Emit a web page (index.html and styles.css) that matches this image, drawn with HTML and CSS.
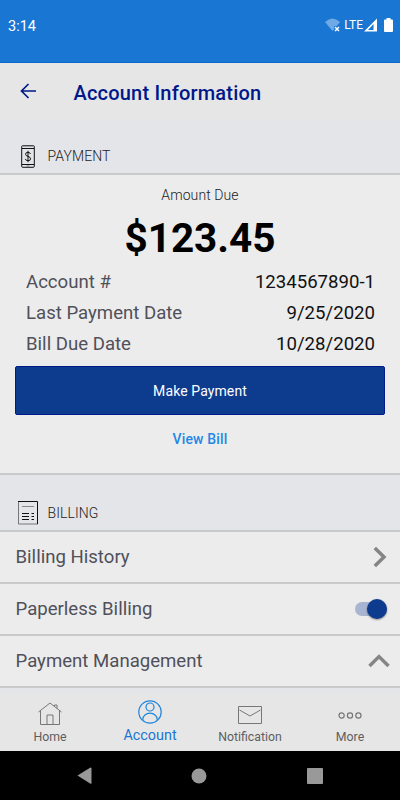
FILE: index.html
```html
<!DOCTYPE html>
<html lang="en">
<head>
<meta charset="utf-8">
<title>Account Information</title>
<link rel="stylesheet" href="styles.css">
</head>
<body>
<div class="phone">
  <div class="status">
    <span class="clock">3:14</span>
    <svg class="wifi" width="16" height="14" viewBox="0 0 16 14"><path d="M0 4Q7.500-3 15 4L7.500 13Z" fill="#70aae6"/><path d="M9 8h7v6H9z" fill="#1976d2"/><path d="M10 9l4 4M14 9l-4 4" stroke="#fff" stroke-width="1.500"/></svg>
    <span class="lte">LTE</span>
    <svg class="signal" width="13" height="14" viewBox="0 0 13 14"><path d="M0 13.500L13 .5v13z" fill="#fff"/><path d="M9.500 6v6H4z" fill="#1976d2"/></svg>
    <svg class="battery" width="9" height="14" viewBox="0 0 9 14"><path d="M2.500 0h4v1.500H8q1 0 1 1V13q0 1-1 1H1q-1 0-1-1V2.500q0-1 1-1h1.500z" fill="#fff"/></svg>
  </div>
  <header class="header">
    <svg width="18" height="16" viewBox="0 0 18 16" fill="none" stroke="#00188a" stroke-width="1.700"><path d="M17 8H2.500M9.500 1L2.500 8l7 7"/></svg>
    <h1>Account Information</h1>
  </header>
  <div class="section">
    <svg width="14" height="23" viewBox="0 0 14 23" fill="none" stroke="#111"><rect x=".7" y=".7" width="12.600" height="21.600" rx="1"/><path d="M1 3.500h12M1 19.500h12"/><path d="M1 1.300h12" stroke="#999"/><path d="M9.500 9Q9 7.300 7 7.300 4.600 7.300 4.600 9.200 4.600 10.800 7 11.400 9.600 12 9.600 13.800 9.600 15.700 7 15.700 4.700 15.700 4.300 13.900M7 5.800v11.400"/><path d="M5.500 21h3" stroke="#777"/></svg>
    <span>PAYMENT</span>
  </div>
  <main class="payment">
    <p class="due">Amount Due</p>
    <p class="amount">$123.45</p>
    <dl>
      <div><dt>Account #</dt><dd>1234567890-1</dd></div>
      <div><dt>Last Payment Date</dt><dd>9/25/2020</dd></div>
      <div><dt>Bill Due Date</dt><dd>10/28/2020</dd></div>
    </dl>
    <button class="pay">Make Payment</button>
    <a class="view">View Bill</a>
  </main>
  <div class="section billing">
    <svg width="20" height="24" viewBox="0 0 20 24" fill="none"><path d="M.5.500V23H20" stroke="#777"/><path d="M0 .5h19.500V23" stroke="#111"/><path d="M4 5.500h12" stroke="#888"/><path d="M4 12.500h7M13.500 12.500H16M4 15.500h7M13.500 15.500H16M4 18.500h7M13.500 18.500H16" stroke="#111"/></svg>
    <span>BILLING</span>
  </div>
  <div class="row">
    <span>Billing History</span>
    <svg class="right" width="14" height="22" viewBox="0 0 14 22"><path d="M1.800 2L11 11l-9.200 9" fill="none" stroke="#858585" stroke-width="3.500"/></svg>
  </div>
  <div class="row">
    <span>Paperless Billing</span>
    <span class="toggle"><i></i></span>
  </div>
  <div class="row">
    <span>Payment Management</span>
    <svg class="up" width="22" height="14" viewBox="0 0 22 14"><path d="M1.500 12L11 2.600l9.500 9.400" fill="none" stroke="#858585" stroke-width="3.500"/></svg>
  </div>
  <nav class="tabs">
    <div class="tab"><svg width="24" height="24" viewBox="0 0 24 24" fill="none" stroke="#777"><path d="M.5 10L12 1l11.500 9M2.500 8.500v14h19v-14M9 22.500v-9.500h6v9.500M16.500 4.500V3H19v3.500"/></svg><span>Home</span></div>
    <div class="tab active"><svg width="24" height="24" viewBox="0 0 24 24" fill="none" stroke="#2185dc" stroke-width="1.200"><circle cx="12" cy="12" r="11.200"/><circle cx="12" cy="7" r="4"/><path d="M4.800 20v-.5a7.200 6.300 0 0 1 14.400 0v.5"/></svg><span>Account</span></div>
    <div class="tab"><svg width="26" height="24" viewBox="0 0 26 24" fill="none" stroke="#777"><path d="M1.500 4.500h23v17h-23zM2.500 8L13 14 23.500 8"/></svg><span>Notification</span></div>
    <div class="tab"><svg width="24" height="24" viewBox="0 0 24 24" fill="none" stroke="#777" stroke-width="1.200"><circle cx="3.600" cy="13.500" r="2.600"/><circle cx="12" cy="13.500" r="2.600"/><circle cx="20.400" cy="13.500" r="2.600"/></svg><span>More</span></div>
  </nav>
  <div class="system">
    <svg width="15" height="18" viewBox="0 0 15 18"><path d="M.5 8.500L13.500.5q1 0 1 1v14.500q0 1-1 .7z" fill="#999"/></svg>
    <svg width="16" height="16" viewBox="0 0 16 16"><circle cx="8" cy="8" r="7.500" fill="#999"/></svg>
    <svg width="16" height="16" viewBox="0 0 16 16"><rect width="16" height="16" rx="1" fill="#999"/></svg>
  </div>
</div>
</body>
</html>
```
FILE: styles.css
```css
* { box-sizing: border-box; }
body { margin: 0; font-family: Roboto, sans-serif; }
p, h1, dl, dd { margin: 0; }
.phone { width: 400px; height: 800px; overflow: hidden; display: flex; flex-direction: column; background: #ececec; }
.phone > * { flex-shrink: 0; }
svg { display: block; flex: none; }
.status { height: 63px; background: #1976d2; color: #fff; display: flex; align-items: flex-start; padding: 18px 7px 0 8px; border-bottom: 1px solid #0b68ca; }
.clock { font-size: 14.5px; line-height: 17px; margin-right: auto; }
.wifi { margin-right: 3px; }
.lte { font-size: 12px; line-height: 15px; margin-right: 1px; }
.signal { margin-right: 7px; }
.header { height: 58px; background: #e6e6e6; display: flex; align-items: center; padding: 0 19px 2px; }
.header svg { margin-right: 36.5px; }
h1 { font-size: 20px; line-height: 24px; font-weight: 500; letter-spacing: .2px; color: #00188a; padding-top: 3px; }
.section { height: 54px; background: #e4e5e9; border-bottom: 2px solid #c9cacc; display: flex; align-items: center; padding: 18px 21px 0; font-size: 14px; font-weight: 300; letter-spacing: .1px; color: #222; }
.section svg { margin-right: 12.5px; }
.payment { height: 298px; padding: 0 15px; display: flex; flex-direction: column; }
.due { text-align: center; font-size: 14px; line-height: 20px; margin-top: 10px; font-weight: 300; letter-spacing: .1px; color: #222; }
.amount { text-align: center; font-size: 40.5px; line-height: 48px; margin-top: 9px; font-weight: 700; color: #000; }
dl { margin-top: 5px; padding: 0 10px 0 11px; }
dl div { display: flex; justify-content: space-between; height: 31px; line-height: 31px; font-size: 18.6px; }
dt { color: #50505a; }
dd { color: #111; }
.pay { width: 370px; height: 49px; margin: 6px 0 0; border: 1px solid #001a8c; border-radius: 2px; background: #0d3b8e; color: #fff; font: 400 14px Roboto, sans-serif; letter-spacing: .1px; }
.view { text-align: center; font-size: 14px; line-height: 20px; margin-top: 14px; font-weight: 500; letter-spacing: .15px; color: #1e88e5; }
.billing { height: 59px; border-top: 2px solid #c9cacc; padding: 21px 18px 0; }
.billing svg { margin-right: 9.5px; }
.row { height: 52px; border-bottom: 2px solid #c9cacc; display: flex; align-items: center; justify-content: space-between; padding: 0 13px 0 15.5px; font-size: 18.6px; color: #50505a; }
.toggle { position: relative; width: 32px; height: 14px; border-radius: 7px; background: #a8b5d2; }
.toggle i { position: absolute; right: 0; top: -3px; width: 20px; height: 20px; border-radius: 50%; background: #0d3b8e; box-shadow: 0 1px 2px #0006; }
.up { margin-right: -3px; }
.tabs { height: 63px; border-top: 6px solid #e4e5e9; background: #e6e6e6; display: grid; grid-template-columns: repeat(4, 1fr); }
.tab { display: flex; flex-direction: column; align-items: center; padding-top: 8px; font-size: 12.3px; color: #5e5e5e; }
.tab span { line-height: 16px; margin-top: 3px; }
.tab.active { color: #1976d2; font-size: 14.4px; padding-top: 6px; }
.active span { margin-top: 4px; }
.system { flex: 1; background: #000; display: flex; align-items: center; justify-content: center; gap: 99.5px; padding-right: 1px; }
```
